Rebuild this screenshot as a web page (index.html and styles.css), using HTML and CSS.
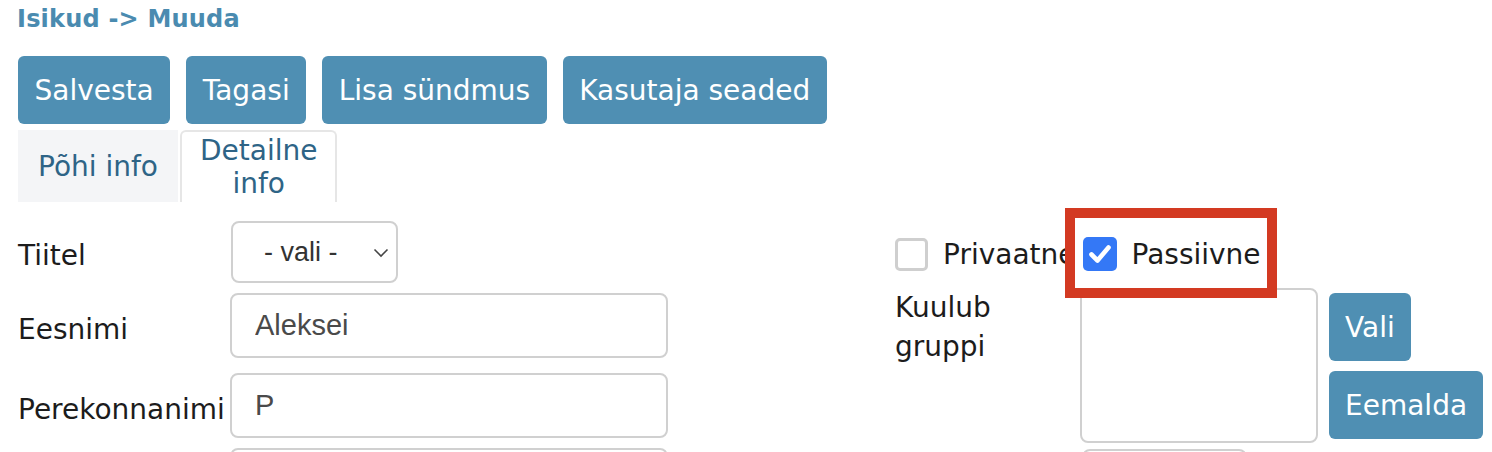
FILE: index.html
```html
<!DOCTYPE html>
<html lang="et">
<head>
    <meta charset="UTF-8">
    <title>Isikud - Muuda</title>
    <link rel="stylesheet" href="styles.css">
</head>
<body>
    <h1 class="crumb">Isikud -&gt; Muuda</h1>
    <div class="toolbar">
        <button type="button" class="btn">Salvesta</button>
        <button type="button" class="btn">Tagasi</button>
        <button type="button" class="btn">Lisa sündmus</button>
        <button type="button" class="btn">Kasutaja seaded</button>
    </div>
    <ul class="tabs">
        <li class="tab">Põhi info</li>
        <li class="tab active">Detailne<br>info</li>
    </ul>
    <form class="person" action="">
        <div class="col-main">
            <div class="row row-first">
                <label class="lbl" for="tiitel">Tiitel</label>
                <span class="select-wrap">
                    <select class="sel" id="tiitel" name="tiitel">
                        <option>- vali -</option>
                        <option>Hr</option>
                        <option>Pr</option>
                    </select>
                    <svg class="chev" width="16" height="10" viewBox="0 0 16 10"><path d="M1.5 1.5 L8 8 L14.5 1.5" fill="none" stroke="#444" stroke-width="1.6"/></svg>
                </span>
            </div>
            <div class="row row-wide">
                <label class="lbl" for="eesnimi">Eesnimi</label>
                <input class="txt" type="text" id="eesnimi" name="eesnimi" value="Aleksei">
            </div>
            <div class="row">
                <label class="lbl" for="perenimi">Perekonnanimi</label>
                <input class="txt" type="text" id="perenimi" name="perenimi" value="P">
            </div>
            <div class="row">
                <label class="lbl" for="isikukood"></label>
                <input class="txt" type="text" id="isikukood" name="isikukood">
            </div>
        </div>
        <div class="col-side">
            <div class="checks">
                <label class="chk"><span class="box"></span>Privaatne</label>
                <label class="chk marked"><span class="box on"><svg width="24" height="20" viewBox="0 0 24 20"><path d="M3.5 10.5 L9.5 16.5 L20.5 3.5" fill="none" stroke="#fff" stroke-width="4.6" stroke-linecap="round" stroke-linejoin="round"/></svg></span>Passiivne</label>
            </div>
            <div class="group-row">
                <span class="lbl-group">Kuulub gruppi</span>
                <div class="group-box">
                    <textarea class="area" name="grupid"></textarea>
                    <span class="sel-small"></span>
                </div>
                <div class="group-btns">
                    <button type="button" class="btn">Vali</button>
                    <button type="button" class="btn">Eemalda</button>
                </div>
            </div>
        </div>
    </form>
</body>
</html>
```

FILE: styles.css
```css
body {
    margin: 0;
    padding: 0 18px;
    font-family: "DejaVu Sans", Verdana, sans-serif;
    font-size: 28px;
    color: #1c1c1c;
    background: #fff;
    overflow: hidden;
}
.crumb {
    margin: 5px 0 0 -1px;
    font-size: 24px;
    line-height: 28px;
    font-weight: bold;
    letter-spacing: 0.2px;
    color: #4a8bb0;
}
.toolbar {
    display: flex;
    gap: 16px;
    margin-top: 23px;
}
.btn {
    height: 68px;
    padding: 0 16.5px;
    border: none;
    border-radius: 6px;
    background: #4f8fb3;
    color: #fff;
    font-family: "DejaVu Sans", Verdana, sans-serif;
    font-size: 28px;
}
.tabs {
    display: flex;
    gap: 2px;
    list-style: none;
    margin: 6px 0 0;
    padding: 0;
}
.tab {
    height: 72px;
    display: flex;
    align-items: center;
    justify-content: center;
    text-align: center;
    padding: 0 20px;
    line-height: 33px;
    color: #2e6486;
    background: #f4f5f7;
}
.tab.active {
    height: 70px;
    margin-top: 0;
    background: #fff;
    border: 2px solid #e6e6e6;
    border-bottom: none;
    border-radius: 6px 6px 0 0;
    padding: 0 18px;
}
.person {
    display: flex;
    margin-top: 19px;
}
.col-main {
    width: 650px;
}
.row {
    display: flex;
    align-items: center;
    margin-bottom: 10px;
}
.row-wide {
    margin-bottom: 15px;
}
.lbl {
    width: 212px;
    padding-top: 7px;
    line-height: 33px;
}
.select-wrap {
    position: relative;
    display: inline-block;
}
.sel {
    appearance: none;
    -webkit-appearance: none;
    width: 167px;
    height: 62px;
    margin-left: 1px;
    padding: 0 0 0 31px;
    border: 2px solid #d0d0d0;
    border-radius: 8px;
    background: #fff;
    font-family: "Liberation Sans", Arial, sans-serif;
    font-size: 27px;
    color: #333;
}
.chev {
    position: absolute;
    right: 9px;
    top: 27px;
}
.txt {
    box-sizing: border-box;
    width: 438px;
    height: 65px;
    padding: 0 23px;
    border: 2px solid #d0d0d0;
    border-radius: 8px;
    font-family: "Liberation Sans", Arial, sans-serif;
    font-size: 29px;
    color: #4a4a4a;
}
.col-side {
    margin-left: 227px;
}
.checks {
    display: flex;
    align-items: center;
    height: 62px;
    padding-top: 4px;
    box-sizing: border-box;
}
.chk {
    display: flex;
    align-items: center;
    margin-right: 7px;
    line-height: 33px;
}
.box {
    box-sizing: border-box;
    width: 33px;
    height: 33px;
    margin-right: 15px;
    border: 3px solid #cfcfcf;
    border-radius: 5px;
    display: flex;
    align-items: center;
    justify-content: center;
}
.box.on {
    width: 34px;
    height: 34px;
    margin-right: 15px;
    border: none;
    background: #3478f6;
}
.marked {
    position: relative;
}
.marked::after {
    content: "";
    position: absolute;
    left: -18px;
    right: -16px;
    top: -29px;
    bottom: -27px;
    border: 10px solid #d33a22;
}
.group-row {
    display: flex;
    margin-top: 5px;
}
.lbl-group {
    width: 150px;
    margin-right: 35px;
    line-height: 39px;
}
.group-box {
    display: flex;
    flex-direction: column;
    gap: 6px;
}
.area {
    box-sizing: border-box;
    width: 238px;
    height: 155px;
    border: 2px solid #d0d0d0;
    border-radius: 8px;
    resize: none;
}
.sel-small {
    display: block;
    width: 165px;
    height: 60px;
    margin-left: 2px;
    border: 2px solid #d0d0d0;
    border-radius: 8px;
    box-sizing: border-box;
}
.group-btns {
    display: flex;
    flex-direction: column;
    align-items: flex-start;
    gap: 10px;
    margin: 5px 0 0 11px;
}
.group-btns .btn {
    padding: 0 16px;
}
```
